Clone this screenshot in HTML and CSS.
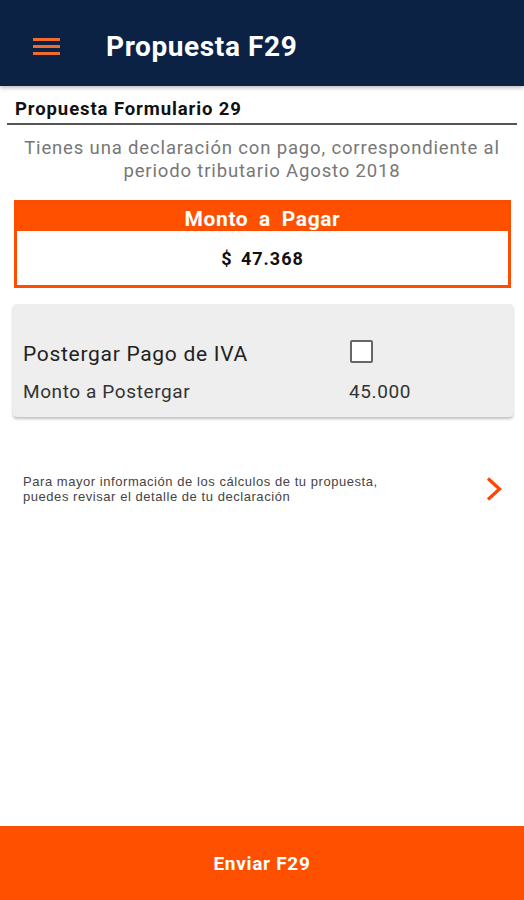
FILE: index.html
```html
<!DOCTYPE html>
<html lang="es">
<head>
    <meta charset="UTF-8">
    <meta name="viewport" content="width=device-width, initial-scale=1.0">
    <title>Propuesta F29</title>
    <link rel="stylesheet" href="styles.css">
</head>
<body>

    <header class="barra">
        <button class="menu" aria-label="Menu">
            <svg width="27" height="17" viewBox="0 0 27 17">
                <rect x="0" y="0" width="27" height="3" fill="#f26b2a"/>
                <rect x="0" y="7" width="27" height="3" fill="#f26b2a"/>
                <rect x="0" y="14" width="27" height="3" fill="#f26b2a"/>
            </svg>
        </button>
        <h1>Propuesta F29</h1>
    </header>

    <main class="contenido">
        <h2 class="titulo-seccion">Propuesta Formulario 29</h2>

        <p class="descripcion">Tienes una declaración con pago, correspondiente al periodo tributario Agosto 2018</p>

        <!-- Monto a pagar -->
        <div class="monto">
            <div class="monto-titulo">Monto a Pagar</div>
            <div class="monto-valor">$ 47.368</div>
        </div>

        <!-- Postergar IVA -->
        <div class="tarjeta">
            <div class="fila">
                <span class="fila-label grande">Postergar Pago de IVA</span>
                <span class="casilla"></span>
            </div>
            <div class="fila">
                <span class="fila-label">Monto a Postergar</span>
                <span class="fila-valor">45.000</span>
            </div>
        </div>

        <!-- Detalle -->
        <a class="detalle" href="#">
            <span>Para mayor información de los cálculos de tu propuesta,<br>puedes revisar el detalle de tu declaración</span>
            <svg width="18" height="26" viewBox="0 0 18 26">
                <path d="M3 2.5 L14.5 13 L3 23.5" fill="none" stroke="#ff4500" stroke-width="3.2"/>
            </svg>
        </a>
    </main>

    <button class="enviar">Enviar F29</button>

</body>
</html>
```

FILE: styles.css
```css
/* Estilos generales */
* {
    box-sizing: border-box;
}

body {
    font-family: Roboto, "Liberation Sans", Arial, sans-serif;
    margin: 0;
    padding: 0;
    min-height: 900px;
    display: flex;
    flex-direction: column;
    background-color: #fff;
    color: #222;
}

/* Barra superior */
.barra {
    height: 86px;
    background-color: #0b2245;
    display: flex;
    align-items: center;
    padding: 6px 0 0 33px;
    box-shadow: 0 2px 4px rgba(0, 0, 0, 0.25);
}

.menu {
    background: none;
    border: none;
    padding: 0;
    margin: 0 46px 0 0;
    display: flex;
}

.barra h1 {
    margin: 0;
    color: #fff;
    font-size: 28px;
    font-weight: 700;
    letter-spacing: 0.6px;
}

.contenido {
    padding: 0 7px;
}

.titulo-seccion {
    margin: 12px 0 0;
    padding: 0 8px 3px;
    font-size: 18.5px;
    font-weight: 700;
    letter-spacing: 0.9px;
    color: #111;
    border-bottom: 2px solid #555;
}

.descripcion {
    margin: 12px 0 0;
    text-align: center;
    font-size: 18.5px;
    letter-spacing: 0.85px;
    line-height: 23px;
    color: #777;
}

/* Monto a pagar */
.monto {
    margin: 17px 6px 0 7px;
    border: 3px solid #ff4d00;
}

.monto-titulo {
    background-color: #ff5000;
    color: #fff;
    text-align: center;
    font-size: 21px;
    font-weight: 700;
    letter-spacing: 0.6px;
    word-spacing: 5px;
    height: 28px;
    line-height: 32px;
}

.monto-valor {
    text-align: center;
    font-size: 18px;
    font-weight: 700;
    letter-spacing: 1px;
    word-spacing: 3px;
    color: #111;
    height: 54px;
    line-height: 56px;
}

/* Tarjeta postergar */
.tarjeta {
    margin: 16px 4px 0 6px;
    background-color: #eeeeee;
    border-radius: 4px;
    padding: 36px 10px 14px;
    box-shadow: 0 2px 3px rgba(0, 0, 0, 0.25);
}

.fila {
    display: grid;
    grid-template-columns: 326px 1fr;
    align-items: center;
}

.fila + .fila {
    margin-top: 13px;
}

.fila-label {
    font-size: 19px;
    letter-spacing: 0.6px;
    color: #333;
}

.fila-label.grande {
    font-size: 21px;
    letter-spacing: 0.7px;
    color: #222;
}

.casilla {
    width: 23px;
    height: 23px;
    border: 2px solid #666;
    border-radius: 2px;
    background-color: #fff;
    margin-left: 1px;
    margin-bottom: 4px;
}

.fila-valor {
    font-size: 19px;
    letter-spacing: 0.6px;
    color: #333;
}

/* Enlace detalle */
.detalle {
    display: flex;
    align-items: center;
    justify-content: space-between;
    margin: 57px 0 0 16px;
    padding-right: 14px;
    text-decoration: none;
    color: #444;
    font-family: "Liberation Sans", Arial, sans-serif;
    font-size: 13px;
    letter-spacing: 0.55px;
    line-height: 15px;
}

/* Boton enviar */
.enviar {
    margin-top: auto;
    height: 74px;
    width: 100%;
    border: none;
    background-color: #ff5000;
    color: #fff;
    font-family: inherit;
    font-size: 19px;
    font-weight: 700;
    letter-spacing: 0.7px;
    cursor: pointer;
}
```
